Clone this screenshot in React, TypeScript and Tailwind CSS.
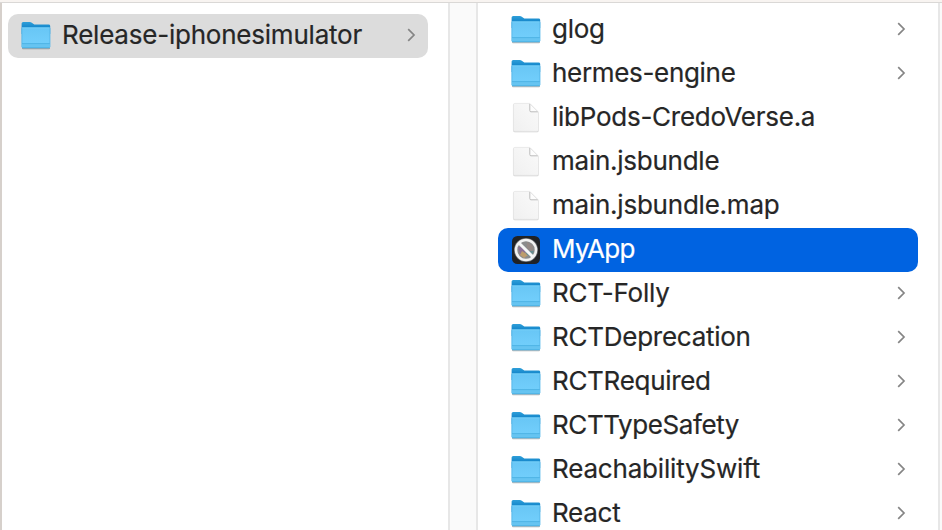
type Kind = "folder" | "file" | "app";
type Entry = { name: string; kind: Kind; tracking: string };

const entries: Entry[] = [
  { name: "glog", kind: "folder", tracking: "tracking-[-0.25px]" },
  { name: "hermes-engine", kind: "folder", tracking: "tracking-[-0.32px]" },
  { name: "libPods-CredoVerse.a", kind: "file", tracking: "tracking-[-0.26px]" },
  { name: "main.jsbundle", kind: "file", tracking: "tracking-[-0.25px]" },
  { name: "main.jsbundle.map", kind: "file", tracking: "tracking-[-0.23px]" },
  { name: "MyApp", kind: "app", tracking: "tracking-[-0.7px]" },
  { name: "RCT-Folly", kind: "folder", tracking: "tracking-[-0.25px]" },
  { name: "RCTDeprecation", kind: "folder", tracking: "tracking-[-0.26px]" },
  { name: "RCTRequired", kind: "folder", tracking: "tracking-[-0.3px]" },
  { name: "RCTTypeSafety", kind: "folder", tracking: "tracking-[-0.41px]" },
  { name: "ReachabilitySwift", kind: "folder", tracking: "tracking-[-0.18px]" },
  { name: "React", kind: "folder", tracking: "tracking-[-0.25px]" },
];

function Gradients() {
  return (
    <svg className="absolute h-0 w-0" aria-hidden="true">
      <defs>
        <linearGradient id="folder-back" x1="0" y1="0" x2="0" y2="1">
          <stop offset="0" stopColor="#2f9fd9" />
          <stop offset="0.45" stopColor="#1587cb" />
        </linearGradient>
        <linearGradient id="folder-front" x1="0" y1="0" x2="0" y2="1">
          <stop offset="0" stopColor="#68c6f5" />
          <stop offset="1" stopColor="#74d0fd" />
        </linearGradient>
        <linearGradient id="paper" x1="0" y1="1" x2="1" y2="0">
          <stop offset="0" stopColor="#f0f0f0" />
          <stop offset="1" stopColor="#fafafa" />
        </linearGradient>
      </defs>
    </svg>
  );
}

function FolderIcon() {
  return (
    <svg viewBox="0 0 32 32" className="size-8 shrink-0">
      <rect x="2" y="27" width="28" height="2.3" rx="1" fill="#000" opacity="0.3" />
      <path d="M1.6 3.6Q1.6 2 3.2 2H9.8Q11 2 11.8 2.7L13.6 4.1Q14.2 4.6 15.2 4.6H28.6Q30.2 4.6 30.2 6V14H1.6Z" fill="url(#folder-back)" />
      <path d="M1.6 8.5Q1.6 7.4 2.8 7.4H29Q30.2 7.4 30.2 8.5V27Q30.2 28.2 28.8 28.2H3Q1.6 28.2 1.6 27Z" fill="url(#folder-front)" />
      <path d="M2 7.8H29.8" stroke="#83d7fb" strokeWidth="0.7" />
      <path d="M1.9 8.2V27M29.9 8.2V27" stroke="#4aaddf" strokeWidth="0.6" />
      <rect x="2" y="23.6" width="27.8" height="3.8" fill="#66c4f1" />
      <path d="M2 23.6H29.8M2 27.6H29.8" stroke="#48ade0" strokeWidth="0.8" />
    </svg>
  );
}

function FileIcon() {
  return (
    <svg viewBox="0 0 32 32" className="size-8 shrink-0">
      <path d="M4.8 1.8H19.8L28.6 10.6V28.8Q28.6 30.3 27.1 30.3H4.8Q3.3 30.3 3.3 28.8V3.3Q3.3 1.8 4.8 1.8Z" fill="#cfcfcf" />
      <path d="M4.8 1.4H19.8L28.5 10.2V28Q28.5 29.4 27.1 29.4H4.8Q3.4 29.4 3.4 28V2.8Q3.4 1.4 4.8 1.4Z" fill="url(#paper)" stroke="#e2e2e2" strokeWidth="0.6" />
      <path d="M19.8 8.8V2L28 10Z" fill="#fdfdfd" />
      <path d="M19.8 2V8.6Q19.8 9.8 21 9.8H28" fill="none" stroke="#bdbdbd" strokeWidth="1" />
      <path d="M19.8 1.6L28.3 10.1" fill="none" stroke="#dedede" strokeWidth="0.7" />
    </svg>
  );
}

function AppIcon() {
  return (
    <svg viewBox="0 0 32 32" className="size-8 shrink-0">
      <rect x="2" y="2" width="28" height="28" rx="5.5" fill="#202226" />
      <circle cx="16" cy="16" r="12" fill="#6d7074" />
      <circle cx="16" cy="16" r="9" fill="#8b8b8b" />
      <path d="M8 13H15V22L10 20Z" fill="#8c7194" />
      <path d="M12 17L18 21L14 24L10 21Z" fill="#bd9c6c" />
      <path d="M17 8L23 12L22 18L17 14Z" fill="#958985" />
      <path d="M18 17L24 17L21 23L16 20Z" fill="#658c90" />
      <circle cx="16" cy="16" r="10" fill="none" stroke="#f2f2f2" strokeWidth="2.6" />
      <path d="M9.2 9.2L22.8 22.8" stroke="#f7f7f7" strokeWidth="3" />
    </svg>
  );
}

function Chevron() {
  return (
    <svg viewBox="0 0 10 14" className="mb-0.5 mr-[11px] h-3.5 w-2.5 shrink-0" fill="none" stroke="#858585" strokeWidth="1.7">
      <path d="M1.2 1.2L7 7L1.2 12.8" />
    </svg>
  );
}

function Row({ entry, background }: { entry: Entry; background: string }) {
  return (
    <div className={`flex h-11 w-[420px] shrink-0 items-center rounded-[10px] pl-3 ${background}`}>
      {entry.kind === "folder" ? <FolderIcon /> : entry.kind === "file" ? <FileIcon /> : <AppIcon />}
      <span className={`mb-0.5 ml-2.5 flex-1 whitespace-nowrap text-[26px] leading-[42px] [-webkit-text-stroke:0.2px] ${entry.tracking}`}>{entry.name}</span>
      {entry.kind === "folder" && <Chevron />}
    </div>
  );
}

export default function App() {
  return (
    <div className="flex h-[530px] w-[942px] flex-col overflow-hidden bg-white font-['Inter','Liberation_Sans',sans-serif] text-[#262626]">
      <Gradients />
      <div className="h-[3px] shrink-0 border-b border-[#dad8d6] bg-[#f8f4f1]" />
      <div className="flex min-h-0 flex-1">
        <div className="w-0.5 shrink-0 bg-[#d6d0cb]" />
        <div className="w-[446px] shrink-0 pl-1.5 pt-[11px]">
          <Row entry={{ name: "Release-iphonesimulator", kind: "folder", tracking: "tracking-[-0.22px]" }} background="bg-[#dcdcdc]" />
        </div>
        <div className="w-[30px] shrink-0 border-x-2 border-[#e7e7e7] bg-[#fafafa]" />
        <div className="flex w-[460px] shrink-0 flex-col pl-5 pt-[5px]">
          {entries.map((entry) => (
            <Row key={entry.name} entry={entry} background={entry.kind === "app" ? "bg-[#0063e1] text-white" : ""} />
          ))}
        </div>
        <div className="w-1 shrink-0 border-l-2 border-[#e7e7e7] bg-[#fafafa]" />
      </div>
    </div>
  );
}
